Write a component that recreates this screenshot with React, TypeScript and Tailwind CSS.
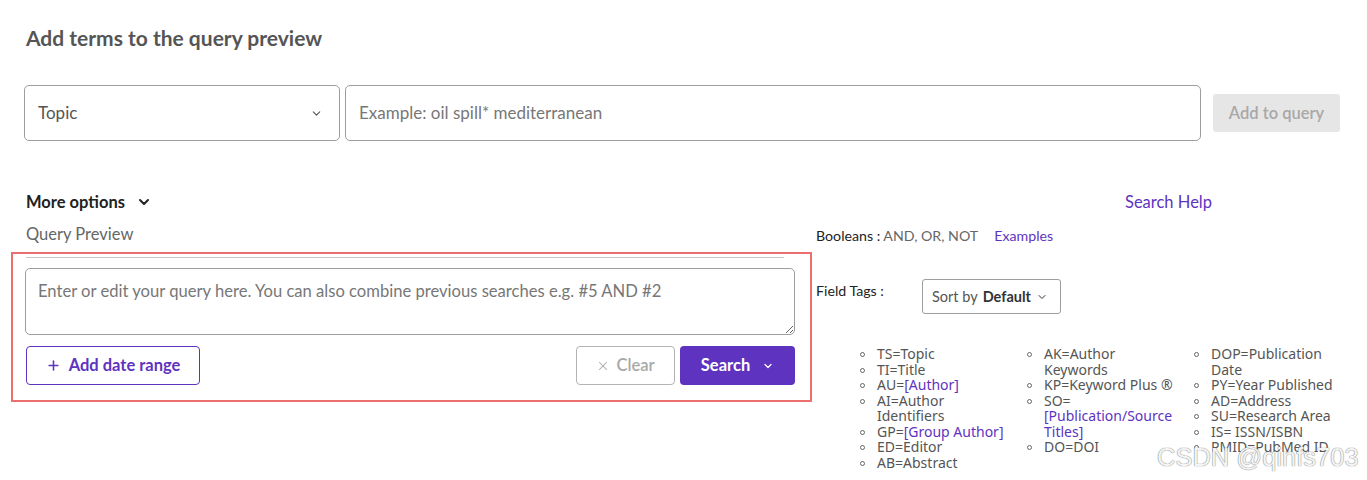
import { ChevronDown, Plus, X } from "lucide-react"

const col1 = [
    { tag: "TS=", label: "Topic" },
    { tag: "TI=", label: "Title" },
    { tag: "AU=", link: "[Author]" },
    { tag: "AI=", label: "Author Identifiers" },
    { tag: "GP=", link: "[Group Author]" },
    { tag: "ED=", label: "Editor" },
    { tag: "AB=", label: "Abstract" },
]

const col2 = [
    { tag: "AK=", label: "Author Keywords" },
    { tag: "KP=", label: "Keyword Plus ®" },
    { tag: "SO=", link: "[Publication/Source Titles]", block: true },
    { tag: "DO=", label: "DOI" },
]

const col3 = [
    { tag: "DOP=", label: "Publication Date" },
    { tag: "PY=", label: "Year Published" },
    { tag: "AD=", label: "Address" },
    { tag: "SU=", label: "Research Area" },
    { tag: "IS=", label: " ISSN/ISBN" },
    { tag: "PMID=", label: "PubMed ID" },
]

type Tag = { tag: string; label?: string; link?: string; block?: boolean }

const TagList = ({ items, width }: { items: Tag[]; width: string }) => (
    <ul className={`flex flex-col ${width}`}>
        {items.map((item) => (
            <li key={item.tag} className="flex flex-row">
                <span className="w-[17px] shrink-0 flex justify-start pt-[6px]">
                    <span className="block w-[5px] h-[5px] rounded-full border border-[#666]" />
                </span>
                <span className="w-[132px] text-[#555]">
                    {item.tag}
                    {item.label}
                    {item.link && (
                        <span className={`${item.block ? "block" : ""} text-[#5e33bf]`}>{item.link}</span>
                    )}
                </span>
            </li>
        ))}
    </ul>
)

export default function App() {
    return (
        <div className="relative w-full h-[480px] bg-white overflow-hidden font-['Lato','Noto_Sans',sans-serif] text-[#333]">
            <div className="pl-[24px] pt-[24px]">
                <h1 className="pl-[2px] text-[21px] leading-[28px] font-bold text-[#555]">
                    Add terms to the query preview
                </h1>

                <div className="mt-[33px] flex flex-row items-center">
                    <div className="w-[316px] h-[56px] rounded-[5px] border border-[#9e9e9e] flex flex-row items-center justify-between pl-[13px] pr-[16px]">
                        <span className="text-[17px] text-[#555]">Topic</span>
                        <ChevronDown size={13} strokeWidth={2} className="text-[#555]" />
                    </div>
                    <div className="ml-[5px] w-[856px] h-[56px] rounded-[5px] border border-[#9e9e9e] flex items-center pl-[13px]">
                        <span className="text-[17px] text-[#777]">Example: oil spill* mediterranean</span>
                    </div>
                    <button className="ml-[12px] w-[127px] h-[38px] rounded-[3px] bg-[#e6e6e6] text-[16.5px] font-semibold text-[#a8a8a8]">
                        Add to query
                    </button>
                </div>

                <div className="mt-[49px] w-[1188px] flex flex-row items-center justify-between">
                    <div className="pl-[2px] flex flex-row items-center gap-[11px] text-[16.5px] leading-[24px] font-bold text-[#222]">
                        More options
                        <ChevronDown size={16} strokeWidth={3} />
                    </div>
                    <span className="text-[16.5px] leading-[24px] text-[#5e33bf]">Search Help</span>
                </div>
            </div>

            <div className="mt-[9px] pl-[11px] flex flex-row">
                <div className="w-[801px] flex flex-col">
                    <div className="pl-[15px] text-[16.5px] leading-[22px] text-[#666]">Query Preview</div>
                    <div className="mt-[7px] border-2 border-[#ec6f6f] pl-[12px] pr-[15px] pt-[3px] pb-[15px]">
                        <div className="ml-[1px] mr-[11px] h-px bg-[#c8c8c8]" />
                        <textarea
                            placeholder="Enter or edit your query here. You can also combine previous searches e.g. #5 AND #2"
                            className="mt-[10px] block w-full h-[67px] rounded-[5px] border border-[#9e9e9e] px-[12px] py-[10px] text-[16.6px] leading-[24px] placeholder:text-[#777] outline-none resize-y"
                        />
                        <div className="mt-[11px] flex flex-row items-center justify-between">
                            <button className="ml-[1px] w-[174px] h-[39px] rounded-[4px] border border-[#5e33bf] flex flex-row items-center justify-center gap-[8px] text-[16.5px] font-bold text-[#5e33bf]">
                                <Plus size={15} strokeWidth={2.5} />
                                Add date range
                            </button>
                            <div className="flex flex-row items-center gap-[5px]">
                                <button className="w-[99px] h-[39px] rounded-[4px] border border-[#b4b4b4] flex flex-row items-center justify-center gap-[6px] text-[16.5px] font-semibold text-[#a8a8a8]">
                                    <X size={14} strokeWidth={1.75} />
                                    Clear
                                </button>
                                <button className="w-[115px] h-[39px] rounded-[4px] bg-[#5e33bf] flex flex-row items-center justify-center gap-[12px] text-[16.5px] font-bold text-white">
                                    Search
                                    <ChevronDown size={12} strokeWidth={2.5} />
                                </button>
                            </div>
                        </div>
                    </div>
                </div>

                <div className="ml-[4px] flex flex-col">
                    <div className="mt-[2px] flex flex-row items-center text-[14.2px] leading-[22px]">
                        <span className="text-[#222]">Booleans :</span>
                        <span className="ml-[3px] text-[#666]">AND, OR, NOT</span>
                        <span className="ml-[16px] text-[#5e33bf]">Examples</span>
                    </div>
                    <div className="mt-[32px] flex flex-row items-start">
                        <span className="mt-[1px] w-[106px] text-[14.2px] leading-[22px] text-[#222]">Field Tags :</span>
                        <div className="w-[139px] h-[35px] rounded-[3px] border border-[#9e9e9e] flex flex-row items-center pl-[9px] gap-[5px] text-[14.5px]">
                            <span className="text-[#555]">Sort by</span>
                            <span className="font-bold text-[#333]">Default</span>
                            <ChevronDown size={12} strokeWidth={2} className="text-[#333]" />
                        </div>
                    </div>
                    <div className="mt-[32px] pl-[44px] flex flex-row font-['Noto_Sans',sans-serif] text-[14px] leading-[15.5px]">
                        <TagList items={col1} width="w-[167px]" />
                        <TagList items={col2} width="w-[167px]" />
                        <TagList items={col3} width="w-[160px]" />
                    </div>
                </div>
            </div>

            <div className="absolute left-[1157px] top-[441px] whitespace-nowrap font-['Liberation_Sans',sans-serif] text-[25.5px] leading-[32px] text-[#f4f4f4] [text-shadow:0_0_1px_#777,0_0_1px_#999]">
                CSDN @qinfs703
            </div>
        </div>
    )
}
